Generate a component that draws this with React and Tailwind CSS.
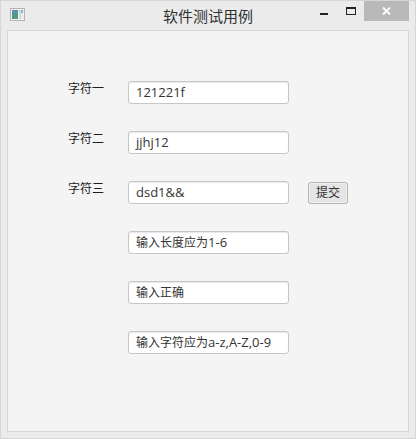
import React from 'react';

const rows = [
    { label: '字符一', value: '121221f' },
    { label: '字符二', value: 'jjhj12' },
    { label: '字符三', value: 'dsd1&&', button: true },
    { value: '输入长度应为1-6' },
    { value: '输入正确' },
    { value: '输入字符应为a-z,A-Z,0-9' },
];

const font = "font-['Open_Sans','Noto_Sans_CJK_SC',sans-serif]";

const AppIcon = () => (
    <svg width="16" height="14" viewBox="0 0 16 14" className="shrink-0">
        <rect x="0.5" y="0.5" width="14" height="12" fill="#f0f0f0" stroke="#b4b4b4" />
        <rect x="2" y="2" width="6" height="9" fill="#4f9a8a" />
        <rect x="2" y="2" width="6" height="3" fill="#5b8fb0" />
        <rect x="9" y="2" width="2" height="9" fill="#d8d8d8" />
        <rect x="11" y="2" width="2" height="3" fill="#7db4dc" />
        <rect x="11" y="5" width="2" height="6" fill="#e3efdf" />
    </svg>
);

// chinese text sits a size below the latin in the reference
const FieldText = ({ text }) =>
    text.split(/([\u4e00-\u9fff]+)/).map((part, i) =>
        /[\u4e00-\u9fff]/.test(part) ? <span key={i} className="text-[12px]">{part}</span> : <span key={i}>{part}</span>
    );

const App = () => {
    return (
        <div className={`w-[416px] h-[439px] flex flex-col bg-[#ebebeb] border border-[#d6d6d6] overflow-hidden ${font}`}>
            <div className="h-[29px] shrink-0 flex items-start">
                <div className="w-[112px] pl-[9px] pt-[7px]">
                    <AppIcon />
                </div>
                <div className="flex-1 text-center text-[15px] leading-[22px] pt-[4px] text-[#303030] whitespace-nowrap">软件测试用例</div>
                <div className="w-[112px] flex items-start justify-end pr-[6px]">
                    <div className="w-[8px] h-[2px] bg-[#222] mt-[12px] mr-[18px]"></div>
                    <div className="w-[10px] h-[8px] border border-t-2 border-[#222] mt-[6px] mr-[8px]"></div>
                    <div className="w-[45px] h-[20px] bg-[#b9b9b9] flex items-center justify-center">
                        <svg width="9" height="8" viewBox="0 0 9 8">
                            <path d="M1 0.5 L8 7.5 M8 0.5 L1 7.5" stroke="#fff" strokeWidth="1.8" fill="none" />
                        </svg>
                    </div>
                </div>
            </div>

            <div className="mx-[6px] h-[402px] bg-[#f4f4f4] border border-[#d8d8d8] pt-[50px] pl-[60px] flex flex-col gap-[27px]">
                {rows.map((row) => (
                    <div key={row.value} className="flex items-start h-[23px]">
                        <div className="w-[60px] text-[12px] leading-[15px] text-[#1c1c1c]">{row.label}</div>
                        <div className="w-[161px] h-[23px] bg-white border border-[#c6c6c6] rounded-[3px] pl-[7px] text-[13px] leading-[21px] text-[#333] whitespace-nowrap shadow-[inset_0_1px_1px_#e8e8e8]">
                            <FieldText text={row.value} />
                        </div>
                        {row.button && (
                            <div className="ml-[19px] mt-[1px] w-[40px] h-[22px] rounded-[3px] border border-[#b5b5b5] bg-[#e4e4e4] shadow-[inset_0_0_0_1px_#f0f0f0] text-center text-[12px] leading-[20px] text-[#333]">提交</div>
                        )}
                    </div>
                ))}
            </div>
        </div>
    );
};

export default App;
